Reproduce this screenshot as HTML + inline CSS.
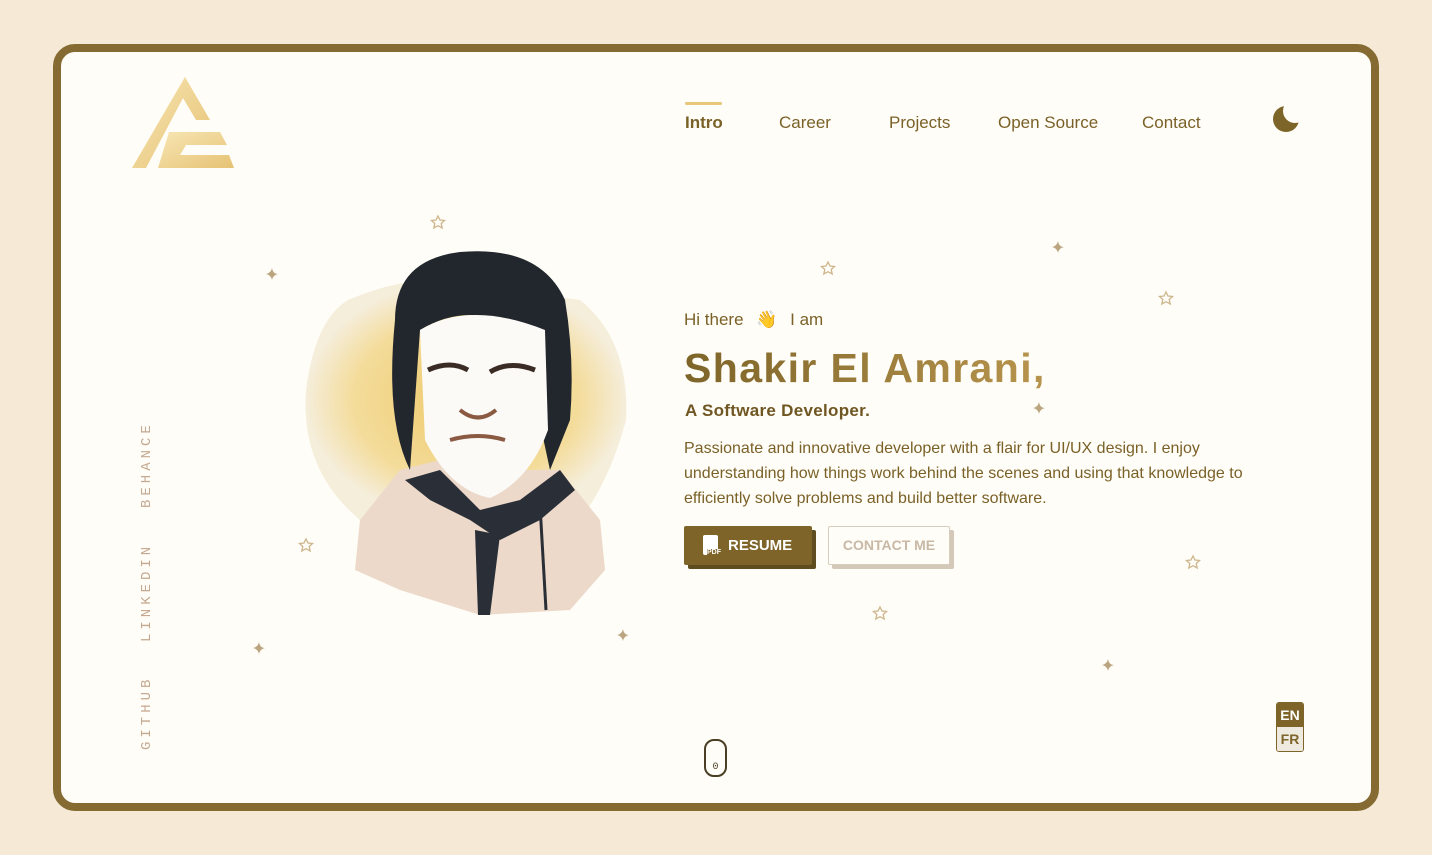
<!DOCTYPE html>
<html><head><meta charset="utf-8"><style>
*{margin:0;padding:0;box-sizing:border-box}
body{width:1432px;height:855px;background:#f6ead6;position:relative;overflow:hidden;font-family:"Liberation Sans",sans-serif}
.frame{position:absolute;left:53px;top:44px;width:1326px;height:767px;border:8px solid #856b32;border-radius:22px;background:#fffdf7}
.a{position:absolute}
.nav{color:#7a6128;font-size:17px;top:113px}
.side{color:#c4a890;font-family:"Liberation Mono",monospace;font-size:14px;letter-spacing:4px;transform:rotate(-90deg);transform-origin:left top;white-space:nowrap}
</style></head><body>
<div class="frame"></div>
<svg class="a" style="left:0;top:0" width="1432" height="855" viewBox="0 0 1432 855">
<defs><linearGradient id="g" x1="0" y1="0" x2="1" y2="1"><stop offset="0" stop-color="#f7e6b4"/><stop offset="1" stop-color="#e6c274"/></linearGradient>
<radialGradient id="y" cx="0.5" cy="0.5" r="0.5"><stop offset="0" stop-color="#ecc35a"/><stop offset="0.7" stop-color="#f2d890"/><stop offset="1" stop-color="#f4ecd8"/></radialGradient>
<linearGradient id="t" x1="0" x2="1"><stop offset="0" stop-color="#7d6428"/><stop offset="1" stop-color="#b8954e"/></linearGradient></defs>
<path d="M132 168 L185 77 L210 120 L196 120 L183 98 L146 168 Z" fill="url(#g)"/>
<path d="M169 132 L220 132 L227 145 L186 145 L180 155 L229 155 L234 168 L158 168 Z" fill="url(#g)"/>
<path d="M348 300 Q420 270 470 285 L580 300 Q630 340 626 420 Q610 480 580 520 L360 520 Q300 470 306 390 Q315 320 348 300Z" fill="url(#y)" opacity="0.9"/>
<path d="M360 520 L400 470 L440 460 L520 470 L560 470 L600 520 L605 570 L570 610 L480 615 L400 590 L355 570 Z" fill="#ecd9c9"/>
<path d="M405 480 L440 470 L480 510 L520 500 L560 470 L575 490 L540 520 L500 540 L470 520 L430 500Z" fill="#2a2e36"/>
<path d="M475 530 L500 535 L490 615 L478 615Z" fill="#2a2e36"/>
<path d="M540 505 L546 610" stroke="#2a2e36" stroke-width="3"/>
<path d="M395 320 Q395 260 460 252 Q540 245 565 300 Q575 360 570 420 L550 470 L520 330 Q470 300 420 330 L410 470 Q385 420 395 320Z" fill="#22262d"/>
<path d="M420 330 Q470 300 545 330 L548 430 Q530 480 490 498 Q450 490 425 440 Z" fill="#fbfaf6"/>
<path d="M428 370 Q450 360 468 370 M490 372 Q510 360 535 370" stroke="#3a2c24" stroke-width="5" fill="none"/>
<path d="M460 410 Q478 425 496 410 M450 440 Q478 432 505 440" stroke="#8a5a42" stroke-width="4" fill="none"/>
<g fill="none" stroke="#cdb68c" stroke-width="1.3">
<path d="M438 216l2 4 4.5.5-3.3 3 1 4.5-4.2-2.3-4.2 2.3 1-4.5-3.3-3 4.5-.5z"/>
<path d="M828 262l2 4 4.5.5-3.3 3 1 4.5-4.2-2.3-4.2 2.3 1-4.5-3.3-3 4.5-.5z"/>
<path d="M1166 292l2 4 4.5.5-3.3 3 1 4.5-4.2-2.3-4.2 2.3 1-4.5-3.3-3 4.5-.5z"/>
<path d="M306 539l2 4 4.5.5-3.3 3 1 4.5-4.2-2.3-4.2 2.3 1-4.5-3.3-3 4.5-.5z"/>
<path d="M880 607l2 4 4.5.5-3.3 3 1 4.5-4.2-2.3-4.2 2.3 1-4.5-3.3-3 4.5-.5z"/>
<path d="M1193 556l2 4 4.5.5-3.3 3 1 4.5-4.2-2.3-4.2 2.3 1-4.5-3.3-3 4.5-.5z"/>
</g>
<g fill="#bba580">
<path d="M272 268 q1 6 6 6 q-5 1-6 6 q-1-5-6-6 q5-1 6-6z"/>
<path d="M1058 241 q1 6 6 6 q-5 1-6 6 q-1-5-6-6 q5-1 6-6z"/>
<path d="M1039 402 q1 6 6 6 q-5 1-6 6 q-1-5-6-6 q5-1 6-6z"/>
<path d="M623 629 q1 6 6 6 q-5 1-6 6 q-1-5-6-6 q5-1 6-6z"/>
<path d="M259 642 q1 6 6 6 q-5 1-6 6 q-1-5-6-6 q5-1 6-6z"/>
<path d="M1108 659 q1 6 6 6 q-5 1-6 6 q-1-5-6-6 q5-1 6-6z"/>
</g>
<circle cx="1286" cy="119" r="13" fill="#7d6428"/>
<circle cx="1295" cy="111" r="12" fill="#fffdf7"/>
<text x="684" y="382" font-family="Liberation Sans" font-weight="bold" font-size="41" letter-spacing="1.4" fill="url(#t)">Shakir El Amrani,</text>
<rect x="705" y="740" width="21" height="36" rx="9" fill="none" stroke="#4a3f25" stroke-width="2"/>
<text x="715.5" y="769" font-size="10" text-anchor="middle" fill="#4a3f25" font-family="Liberation Mono">0</text>
</svg>
<div class="a" style="left:685px;top:102px;width:37px;height:3px;background:#e8c77a;border-radius:2px"></div>
<div class="a nav" style="left:685px;font-weight:bold;color:#7a6128">Intro</div>
<div class="a nav" style="left:779px">Career</div>
<div class="a nav" style="left:889px">Projects</div>
<div class="a nav" style="left:998px">Open Source</div>
<div class="a nav" style="left:1142px">Contact</div>
<div class="a side" style="left:139px;top:508px">BEHANCE</div>
<div class="a side" style="left:139px;top:642px">LINKEDIN</div>
<div class="a side" style="left:139px;top:750px">GITHUB</div>
<div class="a" style="left:684px;top:310px;font-size:17px;color:#7a6128">Hi there <span style="font-size:17px;margin:0 8px">👋</span> I am</div>
<div class="a" style="left:685px;top:401px;font-size:17px;font-weight:bold;color:#6f5622;letter-spacing:0.3px">A Software Developer.</div>
<div class="a" style="left:684px;top:436px;width:600px;font-size:16px;line-height:25px;color:#7a6128">Passionate and innovative developer with a flair for UI/UX design. I enjoy understanding how things work behind the scenes and using that knowledge to efficiently solve problems and build better software.</div>
<div class="a" style="left:688px;top:530px;width:128px;height:39px;background:#5f4c1f;border-radius:2px"></div>
<div class="a" style="left:684px;top:526px;width:128px;height:39px;background:#7e6429;border-radius:2px;color:#fff;font-weight:bold;font-size:15px;line-height:39px;padding-left:44px">RESUME</div>
<div class="a" style="left:703px;top:535px;width:15px;height:20px;background:#fff;border-radius:2px"></div>
<div class="a" style="left:707px;top:549px;font-size:7px;font-weight:bold;background:#7e6429;color:#fff">PDF</div>
<div class="a" style="left:832px;top:530px;width:122px;height:39px;background:#d4c8b8;border-radius:2px"></div>
<div class="a" style="left:828px;top:526px;width:122px;height:39px;background:#fffdf7;border:1.5px solid #d8ccbc;border-radius:2px;color:#c8b8a6;font-weight:bold;font-size:14px;line-height:36px;text-align:center">CONTACT ME</div>
<div class="a" style="left:1276px;top:702px;width:28px;height:50px;border:1.5px solid #7e6429;border-radius:3px;overflow:hidden;font-weight:bold;font-size:14px;text-align:center">
<div style="background:#7e6429;color:#fff;height:24px;line-height:24px">EN</div>
<div style="background:#eeeae0;color:#7e6429;height:24px;line-height:24px">FR</div></div>
</body></html>
